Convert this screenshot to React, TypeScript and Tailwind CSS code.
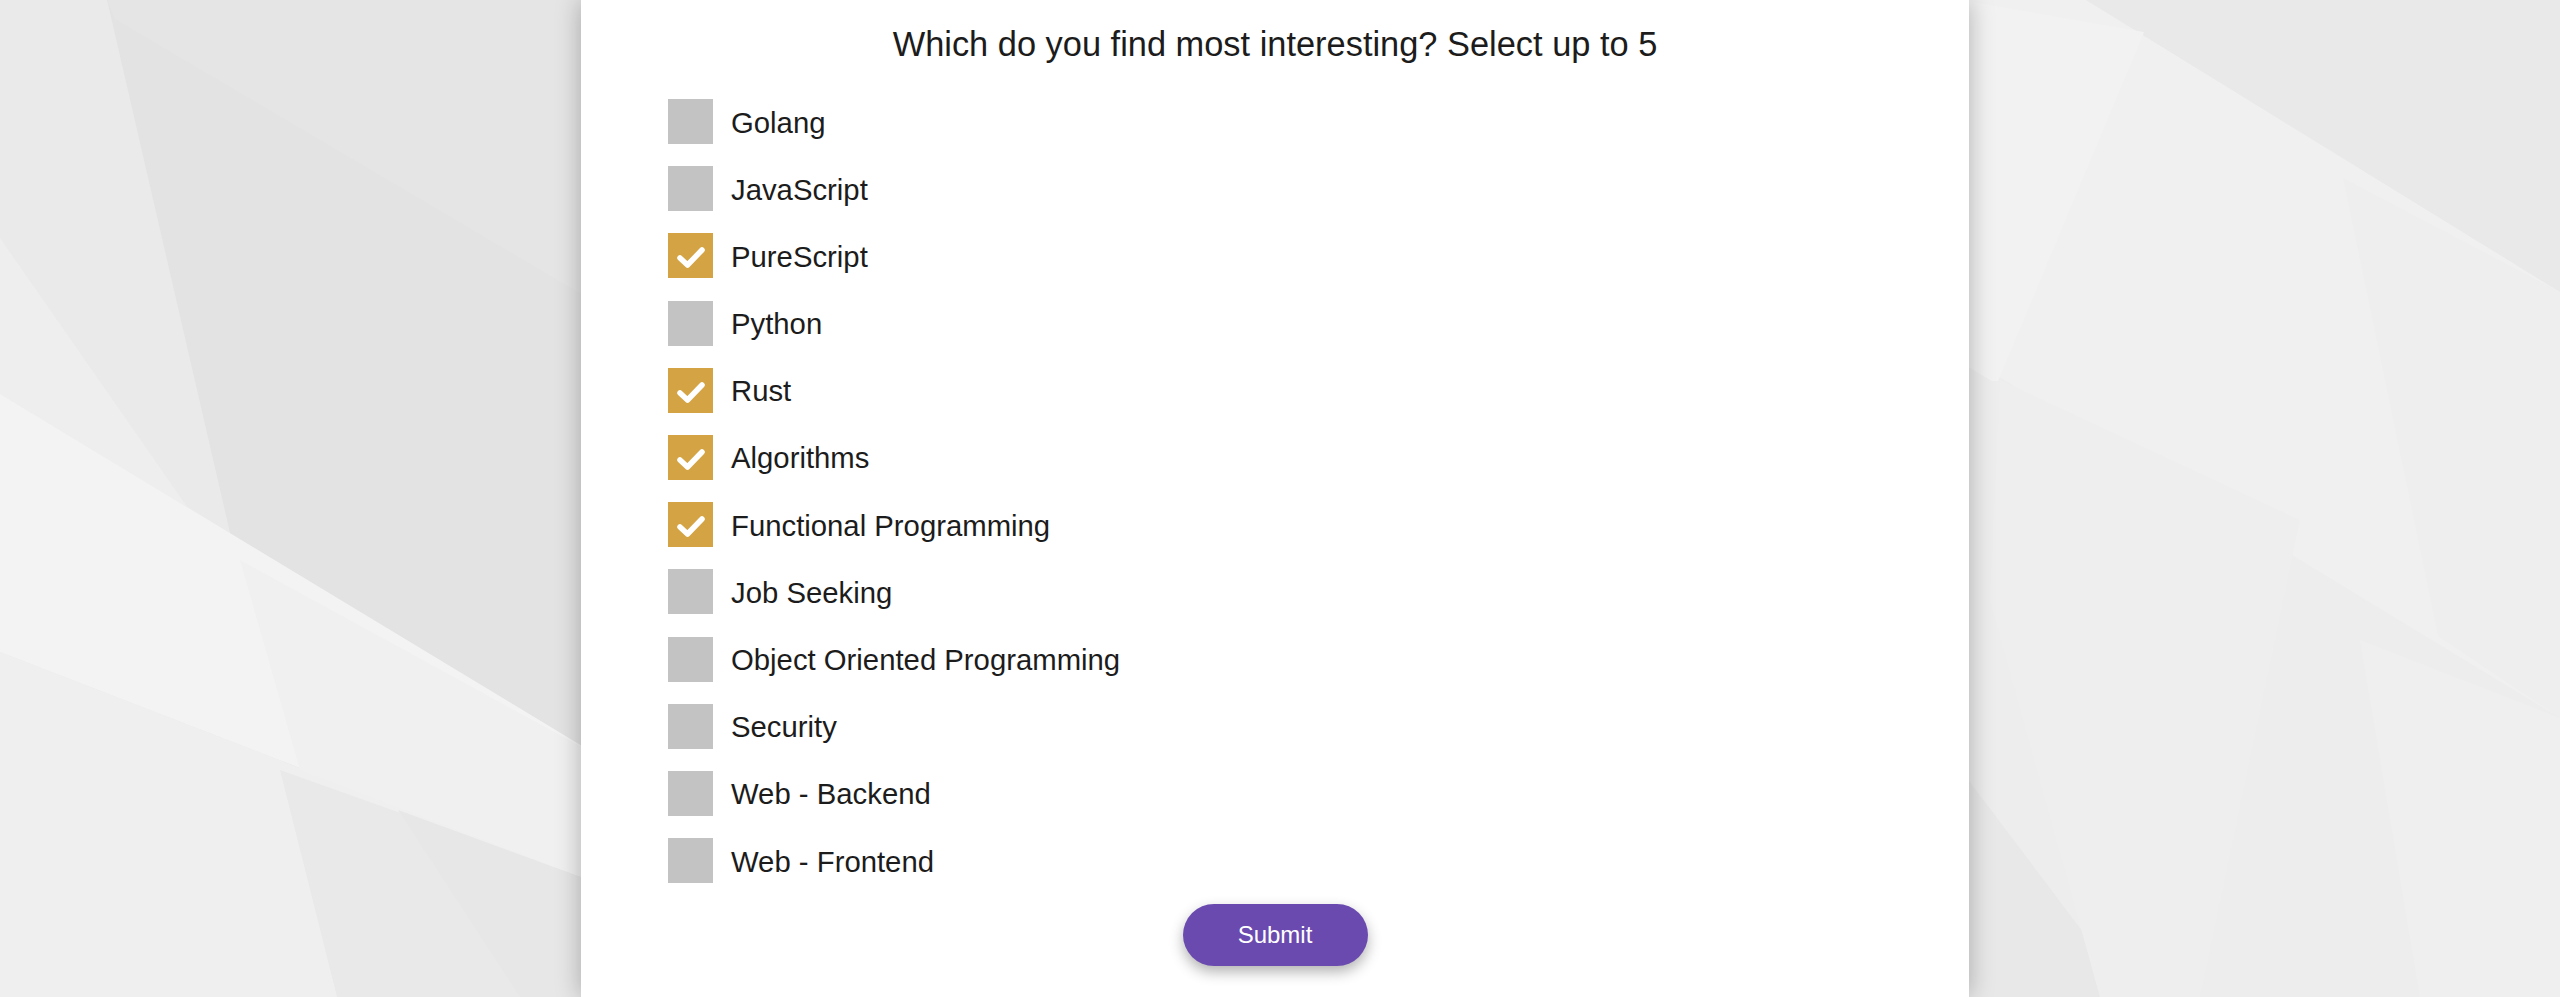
import React from "react";

const items: { label: string; checked: boolean }[] = [
  { label: "Golang", checked: false },
  { label: "JavaScript", checked: false },
  { label: "PureScript", checked: true },
  { label: "Python", checked: false },
  { label: "Rust", checked: true },
  { label: "Algorithms", checked: true },
  { label: "Functional Programming", checked: true },
  { label: "Job Seeking", checked: false },
  { label: "Object Oriented Programming", checked: false },
  { label: "Security", checked: false },
  { label: "Web - Backend", checked: false },
  { label: "Web - Frontend", checked: false },
];

function Background() {
  return (
    <svg
      className="absolute inset-0 w-full h-full"
      viewBox="0 0 2560 997"
      preserveAspectRatio="none"
    >
      <rect x="0" y="0" width="2560" height="997" fill="#ededed" />
      {/* left side */}
      <polygon points="0,0 107,0 337,997 0,997" fill="#eaeaea" />
      <polygon points="107,0 600,0 600,997 337,997" fill="#e3e3e3" />
      <polygon points="0,238 398,810 600,900 600,757 0,394" fill="#eeeeee" />
      <polygon points="0,394 600,757 600,884 0,652" fill="#f3f3f3" />
      <polygon points="0,652 600,884 600,997 0,997" fill="#efefef" />
      <polygon points="240,560 600,757 600,884 300,770" fill="#f0f0f0" />
      <polygon points="337,997 280,770 600,884 600,997" fill="#e9e9e9" />
      <polygon points="115,19 600,305 600,0 107,0" fill="#e5e5e5" />
      <polygon points="398,810 600,884 600,997 520,997" fill="#e7e7e7" />
      {/* right side */}
      <polygon points="1960,0 2086,0 2560,292 2560,718 1975,362 1960,362" fill="#f0f0f0" />
      <polygon points="2086,0 2560,0 2560,292" fill="#e9e9e9" />
      <polygon points="1960,0 2144,32 1998,381 1960,381" fill="#f2f2f2" />
      <polygon points="2343,178 2560,292 2560,718 2438,636" fill="#eeeeee" />
      <polygon points="1960,362 2560,718 2560,997 1960,997" fill="#ededed" />
      <polygon points="1960,769 2132,997 1960,997" fill="#e8e8e8" />
      <polygon points="2000,380 2300,520 2200,997 2100,997 1990,600" fill="#eeeeee" />
      <polygon points="2360,640 2560,718 2560,997 2420,997" fill="#efefef" />
    </svg>
  );
}

function Checkbox({ checked }: { checked: boolean }) {
  return (
    <div
      className={
        "w-[45px] h-[45px] shrink-0 flex items-center justify-center " +
        (checked ? "bg-[#d4a444]" : "bg-[#c3c3c3]")
      }
    >
      {checked && (
        <svg width="45" height="45" viewBox="0 0 45 45">
          <polyline
            points="12,25 19.5,32 34,17"
            fill="none"
            stroke="#ffffff"
            strokeWidth="5.5"
            strokeLinecap="round"
            strokeLinejoin="round"
          />
        </svg>
      )}
    </div>
  );
}

export default function App() {
  return (
    <div
      className="relative w-full h-[997px] overflow-hidden"
      style={{ fontFamily: '"Liberation Sans", Arial, Helvetica, sans-serif' }}
    >
      <Background />
      <div className="relative ml-[581px] w-[1388px] h-full bg-white shadow-[0_0_24px_rgba(0,0,0,0.28)] flex flex-col">
        <h1 className="pt-[24px] text-center text-[34.4px] leading-[40px] text-[#1c1c1c] font-normal">
          Which do you find most interesting? Select up to 5
        </h1>
        <div className="flex flex-col gap-[22.2px] pl-[87px] pt-[35px]">
          {items.map((it) => (
            <div key={it.label} className="flex items-center gap-[18px] h-[45px]">
              <Checkbox checked={it.checked} />
              <span className="pt-[1px] text-[29.3px] leading-[45px] text-[#1c1c1c]">{it.label}</span>
            </div>
          ))}
        </div>
        <div className="flex justify-center pt-[21px]">
          <button className="w-[185px] h-[62px] rounded-full bg-[#6a4aaf] text-white text-[24px] shadow-[0_6px_14px_rgba(0,0,0,0.3)]">
            Submit
          </button>
        </div>
      </div>
    </div>
  );
}
